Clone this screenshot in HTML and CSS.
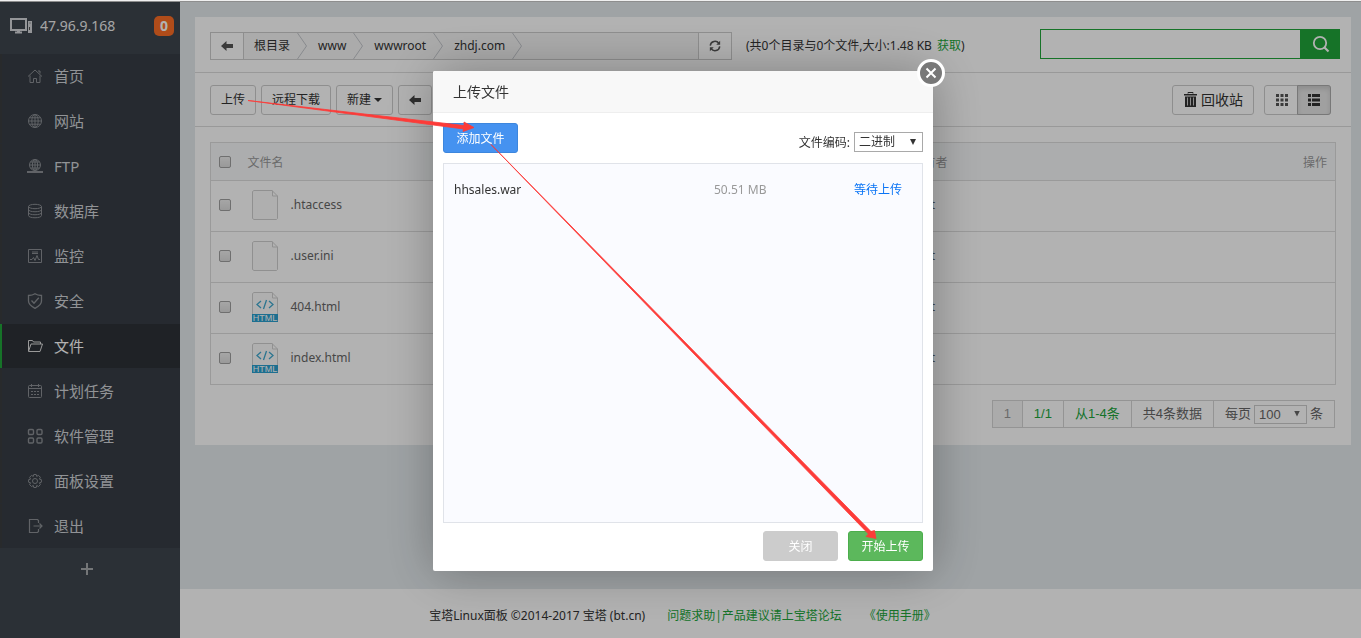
FILE: index.html
```html
<!DOCTYPE html>
<html lang="zh-CN">
<head>
<meta charset="utf-8">
<title>宝塔Linux面板</title>
<link rel="stylesheet" href="styles.css">
</head>
<body>
<div class="app">
  <aside class="sidebar">
    <div class="host">
      <svg class="host-icon" width="23" height="18" viewBox="0 0 23 18" fill="none" stroke="#d4d6da"><rect x="1" y="2" width="15" height="11" stroke-width="2"/><path d="M5 15.500h7" stroke-width="2"/><path d="M7 14.500h3"/><path d="M18 4h4v12h-4z" fill="#d4d6da" stroke="none"/><path d="M19.500 6h1M19.500 10v3" stroke="#555"/></svg>
      <span class="host-ip">47.96.9.168</span>
      <span class="badge">0</span>
    </div>
    <nav class="nav">
      <a href="#"><svg viewBox="0 0 16 16"><path d="M1 8.500 8 2l7 6.500M3 7.500V14.500h3.500v-4h3v4H13V7.500M11 3h2v2.500"/></svg>首页</a>
      <a href="#"><svg viewBox="0 0 16 16"><circle cx="8" cy="8" r="6.500"/><ellipse cx="8" cy="8" rx="3.200" ry="6.500"/><path d="M1.500 8h13M8 1.500v13M2.500 4.800h11M2.500 11.200h11"/></svg>网站</a>
      <a href="#"><svg viewBox="0 0 16 16"><circle cx="8" cy="7" r="5.500"/><ellipse cx="8" cy="7" rx="2.600" ry="5.500"/><path d="M2.500 7h11M8 1.500v11M3.500 4h9M3.500 10h9"/><path d="M0 14h16M6 14h4" stroke-width="2"/></svg>FTP</a>
      <a href="#"><svg viewBox="0 0 16 16"><ellipse cx="8" cy="3.500" rx="6.500" ry="2.200"/><path d="M1.500 3.500v9c0 3 13 3 13 0v-9M1.500 6.500c0 3 13 3 13 0M1.500 9.500c0 3 13 3 13 0"/></svg>数据库</a>
      <a href="#"><svg viewBox="0 0 16 16"><path d="M1.500 1.500h13v13h-13zM5 4h6M5 5.500h6M3 11.500h2l1.500-2 1.500 3 2-5 1.500 4H13"/></svg>监控</a>
      <a href="#"><svg viewBox="0 0 16 16"><path stroke-width="1.300" d="M8 .8C6 2.200 4 2.500 1.500 2.500V8c0 3.500 3 5.500 6.500 7.300C11.500 13.500 14.500 11.500 14.500 8V2.500C12 2.500 10 2.200 8 .8zM4.500 7.500 7 10.200l4.800-5.500"/></svg>安全</a>
      <a href="#" class="active"><svg viewBox="0 0 16 16"><path d="M1.500 13V2.500h4l1 1.500h7v2M1.500 13.500 4 6h11.500L13 13.500z"/></svg>文件</a>
      <a href="#"><svg viewBox="0 0 16 16"><path d="M1.500 3.500q0-1 1-1h11q1 0 1 1v10q0 1-1 1h-11q-1 0-1-1zM1.500 5.500h13M4.500 1v3M11.500 1v3M4 8.500h2M7 8.500h2M10 8.500h2M4 11.500h2M7 11.500h2M10 11.500h2"/></svg>计划任务</a>
      <a href="#"><svg viewBox="0 0 16 16" stroke-width="1.400"><rect x="1.500" y="1.500" width="5" height="5" rx="1.200"/><rect x="10" y="1.500" width="5" height="5" rx="1.200"/><rect x="1.500" y="10" width="5" height="5" rx="1.200"/><rect x="10" y="10" width="5" height="5" rx="1.200"/></svg>软件管理</a>
      <a href="#"><svg viewBox="0 0 16 16"><path d="M6.800 1.500h2.400l.5 1.900 1.800-1 1.900 1.900-1 1.800 2 .6v2.500l-2 .6 1 1.800-1.900 1.900-1.800-1-.5 2H6.800l-.5-2-1.800 1-1.900-1.900 1-1.800-2-.6V6.700l2-.6-1-1.800 1.900-1.900 1.800 1z"/><circle cx="8" cy="8" r="2.500"/></svg>面板设置</a>
      <a href="#"><svg viewBox="0 0 16 16"><path stroke-width="1.200" d="M11.500 5V2.500l-1-1h-8v13h8l1-1V11M6.500 8H15M12.500 5.500 15 8l-2.500 2.500"/></svg>退出</a>
    </nav>
    <button class="add" aria-label="添加"><svg width="14" height="14" viewBox="0 0 14 14" stroke="#a6a9ad" stroke-width="2"><path d="M1 7h12M7 1v12"/></svg></button>
  </aside>

  <div class="page">
    <main class="card">
      <div class="pathbar">
        <div class="crumbs">
          <button class="crumb-btn back" aria-label="返回"><svg width="12" height="10" viewBox="0 0 12 10"><path d="M5.500 0v3H12v4H5.500v3L0 5z" fill="#555"/></svg></button>
          <ol class="crumb-list">
            <li><a href="#">根目录</a><svg width="10" height="26" viewBox="0 0 10 26"><path d="M.5 0 9.500 13 .5 26"/></svg></li>
            <li><a href="#">www</a><svg width="10" height="26" viewBox="0 0 10 26"><path d="M.5 0 9.500 13 .5 26"/></svg></li>
            <li><a href="#">wwwroot</a><svg width="10" height="26" viewBox="0 0 10 26"><path d="M.5 0 9.500 13 .5 26"/></svg></li>
            <li><a href="#">zhdj.com</a><svg width="10" height="26" viewBox="0 0 10 26"><path d="M.5 0 9.500 13 .5 26"/></svg></li>
          </ol>
          <button class="crumb-btn refresh" aria-label="刷新"><svg width="12" height="12" viewBox="0 0 14 14" fill="none" stroke="#555" stroke-width="1.700"><path d="M1.500 6.500C2 1 9 0 11.500 4M12.500 7.500C12 13 5 14 2.500 10"/><path d="M13 1v4.500H8.500zM1 13V8.500h4.500z" fill="#555" stroke="none"/></svg></button>
        </div>
        <span class="info">(共0个目录与0个文件,大小:1.48 KB <a href="#">获取</a>)</span>
        <form class="search">
          <input type="text" aria-label="搜索">
          <button type="button" aria-label="搜索"><svg width="18" height="18" viewBox="0 0 18 18" fill="none" stroke="#fff" stroke-width="1.800"><circle cx="8" cy="8" r="6.200"/><path d="m12.500 12.500 4 4" stroke-width="2.200"/></svg></button>
        </form>
      </div>

      <div class="tools">
        <button class="btn">上传</button>
        <button class="btn">远程下载</button>
        <button class="btn">新建<span class="caret"></span></button>
        <button class="btn" aria-label="后退"><svg width="12" height="10" viewBox="0 0 12 10"><path d="M5.500 0v3H12v4H5.500v3L0 5z" fill="#444"/></svg></button>
        <button class="btn recycle"><svg width="13" height="15" viewBox="0 0 13 15"><path d="M4 1.500V.5h5v1" fill="none" stroke="#333"/><path d="M0 2h13v1.500H0zM1 4.500h11V15H1z" fill="#333"/><path d="M3.500 5.500v8M6.500 5.500v8M9.500 5.500v8" stroke="#ccc"/></svg>回收站</button>
        <div class="views">
          <button aria-label="图标视图"><svg width="12" height="12" viewBox="0 0 12 12" fill="#555"><path d="M0 0h3v3H0zM4.500 0h3v3h-3zM9 0h3v3H9zM0 4.500h3v3H0zM4.500 4.500h3v3h-3zM9 4.500h3v3H9zM0 9h3v3H0zM4.500 9h3v3h-3zM9 9h3v3H9z"/></svg></button>
          <button class="on" aria-label="列表视图"><svg width="12" height="12" viewBox="0 0 12 12" fill="#333"><path d="M0 0h3v3H0zM4 0h8v3H4zM0 4.500h3v3H0zM4 4.500h8v3H4zM0 9h3v3H0zM4 9h8v3H4z"/></svg></button>
        </div>
      </div>

      <div class="content">
        <table class="files">
          <colgroup><col class="c-check"><col class="c-name"><col class="c-owner"><col class="c-op"></colgroup>
          <thead><tr><th><input type="checkbox" aria-label="全选"></th><th>文件名</th><th>所有者</th><th class="op">操作</th></tr></thead>
          <tbody>
            <tr><td><input type="checkbox" aria-label=".htaccess"></td><td><div class="file"><svg width="26" height="30" viewBox="0 0 26 30"><path class="sheet" d="M2 .5h18l5.500 5.500v22.500l-1 1H2l-1.500-1v-27zM20.500.5v5.500h5"/></svg>.htaccess</div></td><td>root</td><td></td></tr>
            <tr><td><input type="checkbox" aria-label=".user.ini"></td><td><div class="file"><svg width="26" height="30" viewBox="0 0 26 30"><path class="sheet" d="M2 .5h18l5.500 5.500v22.500l-1 1H2l-1.500-1v-27zM20.500.5v5.500h5"/></svg>.user.ini</div></td><td>root</td><td></td></tr>
            <tr><td><input type="checkbox" aria-label="404.html"></td><td><div class="file"><svg width="26" height="30" viewBox="0 0 26 30"><path class="sheet" d="M2 .5h18l5.500 5.500v22.500l-1 1H2l-1.500-1v-27zM20.500.5v5.500h5"/><path class="code" d="m9 9-4 3.500 4 3.500M17 9l4 3.500-4 3.500M14.500 8l-3 9"/><path class="tag" d="M0 22h26v8H0z"/><text x="13" y="29">HTML</text></svg>404.html</div></td><td>root</td><td></td></tr>
            <tr><td><input type="checkbox" aria-label="index.html"></td><td><div class="file"><svg width="26" height="30" viewBox="0 0 26 30"><path class="sheet" d="M2 .5h18l5.500 5.500v22.500l-1 1H2l-1.500-1v-27zM20.500.5v5.500h5"/><path class="code" d="m9 9-4 3.500 4 3.500M17 9l4 3.500-4 3.500M14.500 8l-3 9"/><path class="tag" d="M0 22h26v8H0z"/><text x="13" y="29">HTML</text></svg>index.html</div></td><td>root</td><td></td></tr>
          </tbody>
        </table>
        <div class="pager">
          <span class="current">1</span><span class="green">1/1</span><span class="green">从1-4条</span><span>共4条数据</span>
          <span class="per"><label for="per">每页</label><span class="pick"><select id="per"><option>100</option></select></span>条</span>
        </div>
      </div>
    </main>
    <footer class="footer"><span>宝塔Linux面板 ©2014-2017 宝塔 (bt.cn)</span><a href="#">问题求助|产品建议请上宝塔论坛</a><a href="#">《使用手册》</a></footer>
  </div>
</div>

<div class="shade">
  <section class="dialog" role="dialog" aria-labelledby="dlg-title">
    <h2 id="dlg-title">上传文件</h2>
    <button class="close" aria-label="关闭窗口"><svg width="28" height="28" viewBox="0 0 28 28"><circle cx="14" cy="14" r="12.500" fill="#787878" stroke="#fff" stroke-width="3"/><path d="m9.500 9.500 9 9m0-9-9 9" stroke="#fff" stroke-width="2"/></svg></button>
    <div class="dialog-body">
      <div class="dialog-top">
        <button class="add-file">添加文件</button>
        <div class="encoding"><label for="enc">文件编码:</label><span class="pick"><select id="enc"><option>二进制</option></select></span></div>
      </div>
      <ul class="queue">
        <li><span class="q-name">hhsales.war</span><span class="q-size">50.51 MB</span><span class="q-state">等待上传</span></li>
      </ul>
      <div class="dialog-foot"><button class="cancel">关闭</button><button class="start">开始上传</button></div>
    </div>
  </section>
</div>

<svg class="arrows" width="1361" height="638" viewBox="0 0 1361 638" fill="#fd3b38" stroke="#fd3b38" stroke-width=".8" aria-hidden="true">
  <path d="M248 100.500 464 125.500 464 122 474 127.500 463 131.500 463.500 129z"/>
  <path d="M491 144.500 871 531.500 874.500 530.500 876 538.500 866 536.500 868.500 534z"/>
</svg>
</body>
</html>
```
FILE: styles.css
```css
* { box-sizing: border-box; }
body {
  margin: 0;
  font-family: "Noto Sans", "Noto Sans CJK SC", sans-serif;
  font-size: 12px;
  line-height: 18px;
  color: #333;
}
button, input, select { font: inherit; color: inherit; margin: 0; }
button { padding: 0; cursor: pointer; }
a { text-decoration: none; color: #20a53a; }
svg { display: block; flex: none; }

.app { display: flex; min-height: 100vh; border-top: 2px solid #ccc; }

.sidebar { flex: none; width: 180px; background: #3e454e; }
.host { display: flex; align-items: center; height: 52px; padding: 0 6px 4px 10px; }
.host-ip { margin-left: 7px; font-size: 14px; color: #fff; opacity: .9; }
.badge {
  width: 20px; height: 20px; margin-left: auto; border-radius: 5px;
  background: #fc6d26; color: #fff; font-size: 14px; font-weight: 700; line-height: 20px; text-align: center;
}
.nav { background: #373d45; }
.nav a {
  display: flex; align-items: center; gap: 11px;
  height: 44px; margin-bottom: 1px; padding-left: 25px;
  border-left: 2px solid #3a3d40; color: #d0d3d7; font-size: 15px;
}
.nav svg { width: 16px; height: 16px; fill: none; stroke: #8b8f94; }
.nav .active { border-left-color: #20a53a; background: #2d3237; color: #fff; }
.nav .active svg { stroke: #dcdcdc; }
.add { display: flex; align-items: center; width: 100%; height: 40px; padding-left: 80px; border: 0; background: none; }

.page { flex: 1; min-width: 0; display: flex; flex-direction: column; background: #e4eaed; }
.card { margin: 15px 10px 15px 15px; background: #fff; }

.pathbar { display: flex; align-items: center; height: 56px; padding: 0 11px 0 15px; border-bottom: 1px solid #dcdcdc; }
.crumbs { display: flex; flex: 0 1 522px; height: 28px; margin-top: 3px; border: 1px solid #ccc; }
.crumb-btn { display: grid; place-items: center; width: 33px; border: 0; background: #fff; }
.back { border-right: 1px solid #ccc; }
.refresh { border-left: 1px solid #ccc; }
.crumb-list { display: flex; flex: 1; margin: 0; padding: 0; list-style: none; background: #f5f5f5; }
.crumb-list li { display: flex; align-items: center; gap: 7px; padding-left: 10px; }
.crumb-list li + li { padding-left: 11px; }
.crumb-list a { color: #333; }
.crumb-list svg { fill: none; stroke: #c3c6cc; stroke-width: 1; }
.info { margin-left: 14px; padding-top: 2px; white-space: nowrap; }
.info a { margin-left: 2px; }
.search { display: flex; flex: 0 1 300px; height: 30px; margin: 0 0 2px auto; }
.search input { flex: 1; min-width: 0; border: 1px solid #20a53a; background: #fff; }
.search button { display: grid; place-items: center; width: 39px; border: 0; background: #20a53a; }

.tools { display: flex; align-items: center; gap: 5px; height: 54px; padding: 0 20px 0 15px; border-bottom: 1px solid #dcdcdc; }
.btn {
  display: flex; align-items: center; height: 30px; padding: 1px 10px 0;
  border: 1px solid #ccc; border-radius: 3px; background: #fff;
}
.caret { margin-left: 3px; border: 4px solid transparent; border-top-color: #333; border-bottom: 0; }
.recycle { gap: 4px; margin-left: auto; margin-right: 5px; padding: 0 10px 0 11px; font-size: 14px; }
.views { display: flex; height: 30px; border: 1px solid #ccc; border-radius: 3px; }
.views button { display: grid; place-items: center; width: 33px; border: 0; background: none; }
.views .on { width: 34px; margin: -1px; border: 1px solid #adadad; border-radius: 0 3px 3px 0; background: #e6e6e6; box-shadow: inset 0 3px 5px rgba(0, 0, 0, .12); }

.content { padding: 15px 15px 17px; }
.files { width: 100%; table-layout: fixed; border-collapse: collapse; border: 1px solid #ddd; }
.c-check { width: 33px; }
.c-name { width: 660px; }
.c-owner { width: 120px; }
.files th, .files td { padding: 0 8px; border-bottom: 1px solid #ddd; text-align: left; }
.files th { height: 38px; padding-top: 3px; background: #f6f8f9; color: #999; font-weight: 400; }
.files th:first-child { padding-top: 0; }
.files th:first-child + th { padding-left: 4px; }
.files td { height: 51px; padding-bottom: 2px; color: #666; }
.files .op { text-align: right; }
.files input {
  display: block; appearance: none; width: 12px; height: 12px;
  border: 1px solid #a0a0a0; border-radius: 2px; background: linear-gradient(#eee, #dcdcdc);
}
.file { display: flex; align-items: center; gap: 13px; }
.sheet { fill: #fbfbfb; stroke: #cfcfcf; }
.code { fill: none; stroke: #40a8ce; stroke-width: 1.3; }
.tag { fill: #2aa0cf; }
.file text { fill: #fff; font: 9px "Liberation Sans", sans-serif; text-anchor: middle; }

.pager {
  display: flex; width: max-content; height: 28px; margin: 15px 1px 0 auto;
  border: 1px solid #d5d5d5; font: 13px "Liberation Sans", "Noto Sans CJK SC", sans-serif; line-height: 26px; color: #666;
}
.pager > span { padding: 0 11px; border-left: 1px solid #d5d5d5; }
.pager .current { border-left: 0; background: #f5f5f5; color: #999; }
.pager .green { color: #20a53a; }
.pager .per { display: flex; align-items: center; gap: 3px; }

.pick { position: relative; display: inline-flex; }
.pick select { appearance: none; border: 1px solid #a9a9a9; border-radius: 0; background: #fff; padding: 0 4px; outline: 0; }
.pick::after { content: ""; position: absolute; top: 7px; right: 7px; width: 6px; height: 6px; background: #333; clip-path: polygon(0 0, 100% 0, 50% 100%); pointer-events: none; }
.per .pick select { width: 53px; height: 19px; border-color: #ccc; line-height: 17px; }
.per .pick::after { top: 6px; background: #666; }

.footer { display: flex; align-items: center; justify-content: center; gap: 22px; height: 49px; margin-top: auto; padding: 4px 176px 0 0; background: #fff; }

.shade {
  position: fixed; inset: 0; display: flex; align-items: center; justify-content: center;
  padding: 3px 0 0 5px; border-top: 1px solid #f0f0f0; background: rgba(0, 0, 0, .3);
}
.dialog { position: relative; display: flex; flex-direction: column; width: 500px; height: 500px; border-radius: 2px; background: #fff; box-shadow: 1px 1px 50px rgba(0, 0, 0, .3); }
.dialog h2 { height: 42px; margin: 0; padding: 0 20px; border-bottom: 1px solid #eee; border-radius: 2px 2px 0 0; background: #f8f8f8; font-size: 14px; font-weight: 400; line-height: 42px; }
.close { position: absolute; top: -12px; right: -12px; border: 0; background: none; }
.dialog-body { display: flex; flex: 1; flex-direction: column; padding: 10px; }
.dialog-top { display: flex; align-items: flex-start; justify-content: space-between; height: 40px; }
.add-file, .cancel, .start { height: 30px; width: 75px; padding-top: 2px; border: 1px solid #3d86dd; border-radius: 3px; background: #4592f0; color: #fff; }
.encoding { display: flex; align-items: center; gap: 4px; margin-top: 9px; }
.encoding label { padding-top: 2px; }
.encoding select { width: 69px; height: 20px; line-height: 18px; }
.queue { flex: 1; margin: 0 0 8px; padding: 11px 10px; border: 1px solid #e0e3e9; background: #fafbff; list-style: none; }
.queue li { display: flex; line-height: 30px; }
.q-name { flex: 1; }
.q-size { width: 140px; color: #999; }
.q-state { width: 58px; color: #0a74f5; }
.dialog-foot { display: flex; justify-content: flex-end; gap: 10px; }
.cancel { border-color: #ccc; background: #ccc; }
.start { border-color: #4cae4c; background: #5cb85c; }

.arrows { position: fixed; top: 0; left: 0; pointer-events: none; }
```
